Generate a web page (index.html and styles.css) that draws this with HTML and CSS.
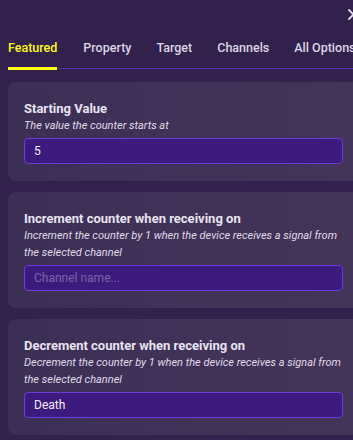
FILE: index.html
```html
<!DOCTYPE html>
<html lang="en">

<head>
    <meta charset="UTF-8">
    <title>Counter Options</title>
    <link rel="stylesheet" href="styles.css">
</head>

<body>
    <div class="panel">
        <div class="top-bar">
            <svg class="close" width="11" height="11" viewBox="0 0 11 11">
                <path d="M1 1 L10 10 M10 1 L1 10" stroke="#e4e0ec" stroke-width="1.8" stroke-linecap="round" />
            </svg>
        </div>

        <div class="tabs">
            <div class="tab active">Featured</div>
            <div class="tab">Property</div>
            <div class="tab">Target</div>
            <div class="tab">Channels</div>
            <div class="tab">All Options</div>
        </div>

        <div class="cards">
            <div class="card">
                <div class="card-title">Starting Value</div>
                <div class="card-desc">The value the counter starts at</div>
                <input class="field" type="text" value="5">
            </div>

            <div class="card">
                <div class="card-title">Increment counter when receiving on</div>
                <div class="card-desc">Increment the counter by 1 when the device receives a signal from the selected channel</div>
                <input class="field" type="text" placeholder="Channel name...">
            </div>

            <div class="card">
                <div class="card-title">Decrement counter when receiving on</div>
                <div class="card-desc">Decrement the counter by 1 when the device receives a signal from the selected channel</div>
                <input class="field" type="text" value="Death">
            </div>
        </div>
    </div>
</body>

</html>
```

FILE: styles.css
```css
html,
body {
    margin: 0;
    padding: 0;
    overflow: hidden;
}

body {
    font-family: Roboto, "Noto Sans", Arial, sans-serif;
    background-color: #32214d;
    width: 353px;
    height: 440px;
}

.panel {
    width: 351px;
    padding-left: 8px;
}

.top-bar {
    height: 26px;
    position: relative;
}

.close {
    position: absolute;
    left: 340px;
    top: 9px;
}

.tabs {
    display: flex;
    border-bottom: 1px solid #5a2db4;
    height: 43px;
    box-sizing: border-box;
    white-space: nowrap;
}

.tab {
    font-size: 12.5px;
    font-weight: 500;
    color: #dcd6e6;
    padding-top: 14px;
    margin-right: 25px;
    box-sizing: border-box;
    flex-shrink: 0;
}

.tab.active {
    color: #ffff00;
    border-bottom: 3px solid #ffff00;
    margin-bottom: -2px;
    margin-right: 26px;
}

.cards {
    display: flex;
    flex-direction: column;
    gap: 11px;
    padding-top: 13px;
}

.card {
    background: linear-gradient(90deg, #3c2f56, #433459);
    border-radius: 8px;
    padding: 18px 16px 17px 16px;
    display: flex;
    flex-direction: column;
}

.card-title {
    font-size: 13px;
    font-weight: 700;
    color: #e8e4f0;
    line-height: 17px;
}

.card-desc {
    font-size: 11px;
    font-style: italic;
    color: #e0dbe9;
    line-height: 17px;
    margin-bottom: 4px;
}

.field {
    font-family: Roboto, "Noto Sans", Arial, sans-serif;
    font-size: 12px;
    color: #f2eef8;
    background-color: #3d1b7e;
    border: 1px solid #6a3cd8;
    border-radius: 4px;
    height: 26px;
    box-sizing: border-box;
    padding: 0 9px;
    outline: none;
}

.field::placeholder {
    color: #7b63a8;
}
```
